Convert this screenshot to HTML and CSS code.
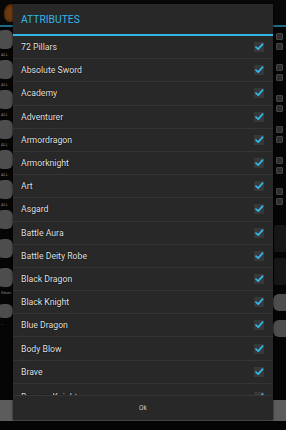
FILE: index.html
```html
<!DOCTYPE html>
<html>
<head>
<meta charset="utf-8">
<link rel="stylesheet" href="styles.css">
</head>
<body>
<div class="app">
  <div class="topbar">
    <div class="logo"></div>
    <div class="topfill"></div>
  </div>
  <div class="main">
    <div class="lcol">
      <div class="lbtn"></div><div class="lbl">ALL</div>
      <div class="lbtn"></div><div class="lbl">ALL</div>
      <div class="lbtn"></div><div class="lbl">ALL</div>
      <div class="lbtn"></div><div class="lbl">ALL</div>
      <div class="lbtn"></div><div class="lbl">ALL</div>
      <div class="lbtn"></div><div class="lbl">ALL</div>
      <div class="lbtn"></div>
      <div class="lbtn"></div>
      <div class="lbtn"></div><div class="lbl">Shuni</div>
      <div class="lbtn short"></div><div class="lbl">...</div>
    </div>
    <div class="rcol">
      <div class="sqpair"><div class="sq"></div><div class="sq"></div></div>
      <div class="sqpair"><div class="sq"></div><div class="sq"></div></div>
      <div class="sqpair"><div class="sq"></div><div class="sq"></div></div>
      <div class="sqpair"><div class="sq"></div><div class="sq"></div></div>
      <div class="sqpair"><div class="sq"></div><div class="sq"></div></div>
      <div class="sqpair"><div class="sq"></div><div class="sq"></div></div>
      <div class="rbox"></div>
      <div class="rbox"></div>
      <div class="rbtn"></div>
      <div class="rbtn"></div>
    </div>
  </div>
  <div class="bottombar"></div>

  <div class="dialog">
    <div class="title">ATTRIBUTES</div>
    <div class="titleline"></div>
    <div class="list">
      <div class="row"><span>72 Pillars</span><i class="cb"><svg viewBox="0 0 10 10"><path d="M2 5.2 L4.2 7.2 L8.6 2.2" /></svg></i></div>
      <div class="row"><span>Absolute Sword</span><i class="cb"><svg viewBox="0 0 10 10"><path d="M2 5.2 L4.2 7.2 L8.6 2.2" /></svg></i></div>
      <div class="row"><span>Academy</span><i class="cb"><svg viewBox="0 0 10 10"><path d="M2 5.2 L4.2 7.2 L8.6 2.2" /></svg></i></div>
      <div class="row"><span>Adventurer</span><i class="cb"><svg viewBox="0 0 10 10"><path d="M2 5.2 L4.2 7.2 L8.6 2.2" /></svg></i></div>
      <div class="row"><span>Armordragon</span><i class="cb"><svg viewBox="0 0 10 10"><path d="M2 5.2 L4.2 7.2 L8.6 2.2" /></svg></i></div>
      <div class="row"><span>Armorknight</span><i class="cb"><svg viewBox="0 0 10 10"><path d="M2 5.2 L4.2 7.2 L8.6 2.2" /></svg></i></div>
      <div class="row"><span>Art</span><i class="cb"><svg viewBox="0 0 10 10"><path d="M2 5.2 L4.2 7.2 L8.6 2.2" /></svg></i></div>
      <div class="row"><span>Asgard</span><i class="cb"><svg viewBox="0 0 10 10"><path d="M2 5.2 L4.2 7.2 L8.6 2.2" /></svg></i></div>
      <div class="row"><span>Battle Aura</span><i class="cb"><svg viewBox="0 0 10 10"><path d="M2 5.2 L4.2 7.2 L8.6 2.2" /></svg></i></div>
      <div class="row"><span>Battle Deity Robe</span><i class="cb"><svg viewBox="0 0 10 10"><path d="M2 5.2 L4.2 7.2 L8.6 2.2" /></svg></i></div>
      <div class="row"><span>Black Dragon</span><i class="cb"><svg viewBox="0 0 10 10"><path d="M2 5.2 L4.2 7.2 L8.6 2.2" /></svg></i></div>
      <div class="row"><span>Black Knight</span><i class="cb"><svg viewBox="0 0 10 10"><path d="M2 5.2 L4.2 7.2 L8.6 2.2" /></svg></i></div>
      <div class="row"><span>Blue Dragon</span><i class="cb"><svg viewBox="0 0 10 10"><path d="M2 5.2 L4.2 7.2 L8.6 2.2" /></svg></i></div>
      <div class="row"><span>Body Blow</span><i class="cb"><svg viewBox="0 0 10 10"><path d="M2 5.2 L4.2 7.2 L8.6 2.2" /></svg></i></div>
      <div class="row"><span>Brave</span><i class="cb"><svg viewBox="0 0 10 10"><path d="M2 5.2 L4.2 7.2 L8.6 2.2" /></svg></i></div>
      <div class="row last"><span>Bravura Knight</span><i class="cb"><svg viewBox="0 0 10 10"><path d="M2 5.2 L4.2 7.2 L8.6 2.2" /></svg></i></div>
    </div>
    <div class="footer">Ok</div>
  </div>
</div>
</body>
</html>
```

FILE: styles.css
```css
html, body {
  margin: 0;
  padding: 0;
  background: #000;
}

.app {
  position: relative;
  width: 286px;
  height: 430px;
  overflow: hidden;
  background: #050505;
  display: flex;
  flex-direction: column;
  font-family: Roboto, "Liberation Sans", sans-serif;
}

.topbar {
  height: 25px;
  border-bottom: 2px solid #1f6a86;
  display: flex;
  background: #080808;
}

.logo {
  width: 14px;
  height: 18px;
  margin: 4px 0 0 4px;
  border-radius: 50% 50% 40% 40%;
  background: #6a3a12;
  box-shadow: inset 0 0 3px #2b1406;
}

.topfill {
  flex: 1;
}

.main {
  flex: 1;
  display: flex;
  justify-content: space-between;
}

.lcol {
  width: 13px;
  padding-top: 3px;
  display: flex;
  flex-direction: column;
  overflow: hidden;
}

.lbtn {
  width: 16px;
  height: 19px;
  margin: 0 0 0 -3px;
  border-radius: 6px;
  background: #4d4d4d;
  flex: none;
}

.lbtn + .lbtn {
  margin-top: 10px;
}

.lbtn.short {
  height: 14px;
  margin-top: 6px;
}

.lbl {
  height: 11px;
  font-size: 4px;
  line-height: 11px;
  color: #8a8a8a;
  padding-left: 1px;
  flex: none;
}

.rcol {
  width: 13px;
  padding-top: 6px;
  display: flex;
  flex-direction: column;
  align-items: flex-end;
}

.sqpair {
  height: 31px;
  width: 13px;
  display: flex;
  flex-direction: column;
  gap: 3px;
  padding-left: 3px;
  box-sizing: border-box;
}

.sq {
  width: 7px;
  height: 7px;
  background: #2e2e2e;
  border: 1px solid #444;
  box-sizing: border-box;
  border-radius: 1px;
}

.rbox {
  width: 12px;
  height: 27px;
  margin-top: 6px;
  background: #161616;
  border-radius: 2px;
}

.rbtn {
  width: 13px;
  height: 17px;
  margin-top: 9px;
  background: #4d4d4d;
  border-radius: 6px 0 0 6px;
}

.bottombar {
  height: 21px;
  margin-bottom: 9px;
  background: #5c5c5c;
  flex: none;
}

.dialog {
  position: absolute;
  left: 13px;
  top: 4px;
  width: 260px;
  height: 416px;
  background: #282828;
  display: flex;
  flex-direction: column;
  box-shadow: 0 0 2px rgba(0, 0, 0, 0.8);
}

.title {
  height: 30px;
  padding: 1px 0 0 8px;
  box-sizing: border-box;
  font-size: 10.3px;
  line-height: 30px;
  color: #33b5e5;
  flex: none;
}

.titleline {
  height: 2px;
  background: #33b5e5;
  flex: none;
}

.list {
  height: 359px;
  overflow: hidden;
  flex: none;
}

.row {
  height: 23.2px;
  box-sizing: border-box;
  border-bottom: 1px solid #343434;
  display: flex;
  align-items: center;
  justify-content: space-between;
  padding: 0 9px 0 8px;
  font-size: 8.7px;
  color: #e6e6e6;
  text-shadow: 0 0 1px #000, 0 0 1px #000;
}

.row.last {
  align-items: flex-start;
  padding-top: 8px;
}

.cb {
  width: 10px;
  height: 10px;
  background: #383838;
  border-radius: 1px;
  display: block;
}

.cb svg {
  width: 10px;
  height: 10px;
  display: block;
}

.cb path {
  fill: none;
  stroke: #33b5e5;
  stroke-width: 1.8;
  stroke-linecap: round;
  stroke-linejoin: round;
}

.footer {
  flex: 1;
  border-top: 1px solid #353535;
  display: flex;
  align-items: center;
  justify-content: center;
  font-size: 6.5px;
  color: #d0d0d0;
}
```
